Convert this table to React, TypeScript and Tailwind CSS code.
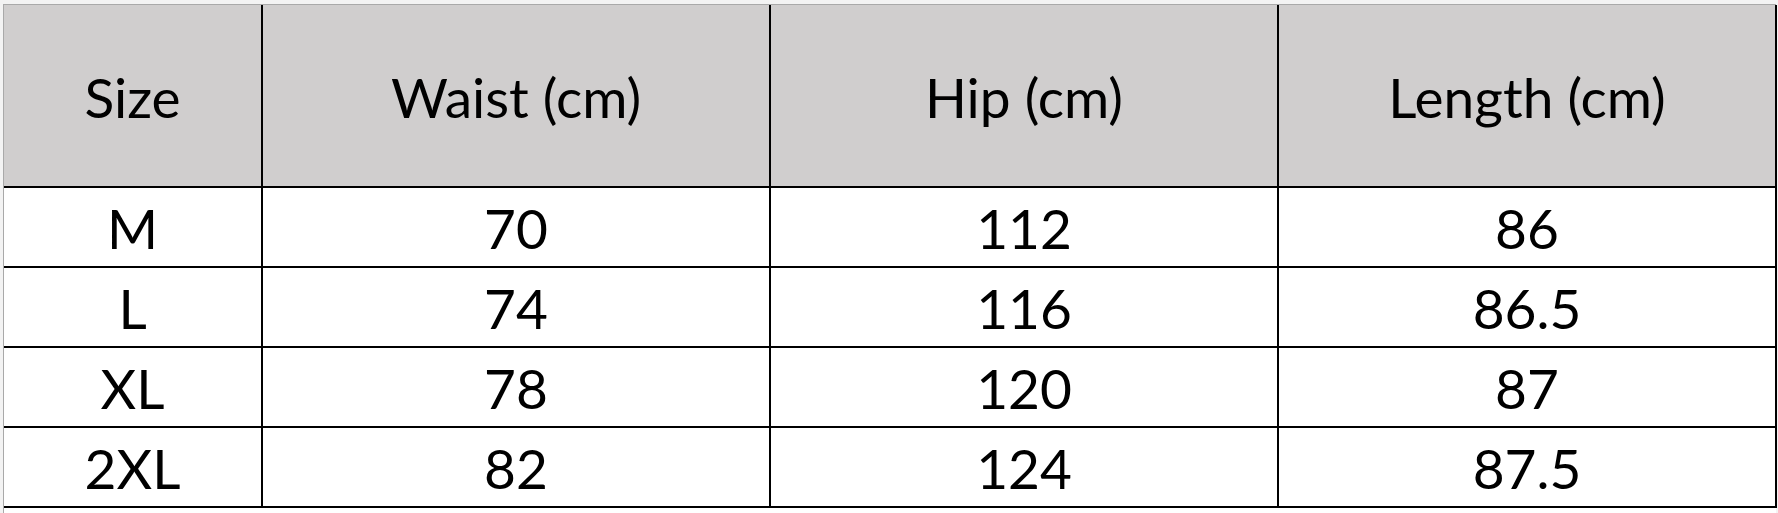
import React from "react";

const headers = ["Size", "Waist (cm)", "Hip (cm)", "Length (cm)"];

const rows = [
    ["M", "70", "112", "86"],
    ["L", "74", "116", "86.5"],
    ["XL", "78", "120", "87"],
    ["2XL", "82", "124", "87.5"],
];

export default function App() {
    return (
        <div className="h-[513px] w-[1778px] overflow-hidden bg-[#f3f3f3] pl-[3px] pt-[4px]">
            <div className="w-[1773px] h-[509px] bg-white border-l border-t border-[#a9a9a9] font-['Lato',sans-serif] text-black text-[55px]">
                <div className="grid grid-cols-[259px_508px_508px_498px]">
                    {headers.map((h) => (
                        <div key={h}
                             className="h-[183px] pt-[3px] bg-[#d0cece] border-r-2 border-b-2 border-black flex items-center justify-center leading-none">
                            {h}
                        </div>
                    ))}
                    {rows.map((row) =>
                        row.map((cell, i) => (
                            <div key={row[0] + i}
                                 className="h-[80px] pt-[2px] border-r-2 border-b-2 border-black flex items-center justify-center leading-none">
                                {cell}
                            </div>
                        ))
                    )}
                </div>
            </div>
        </div>
    );
}
